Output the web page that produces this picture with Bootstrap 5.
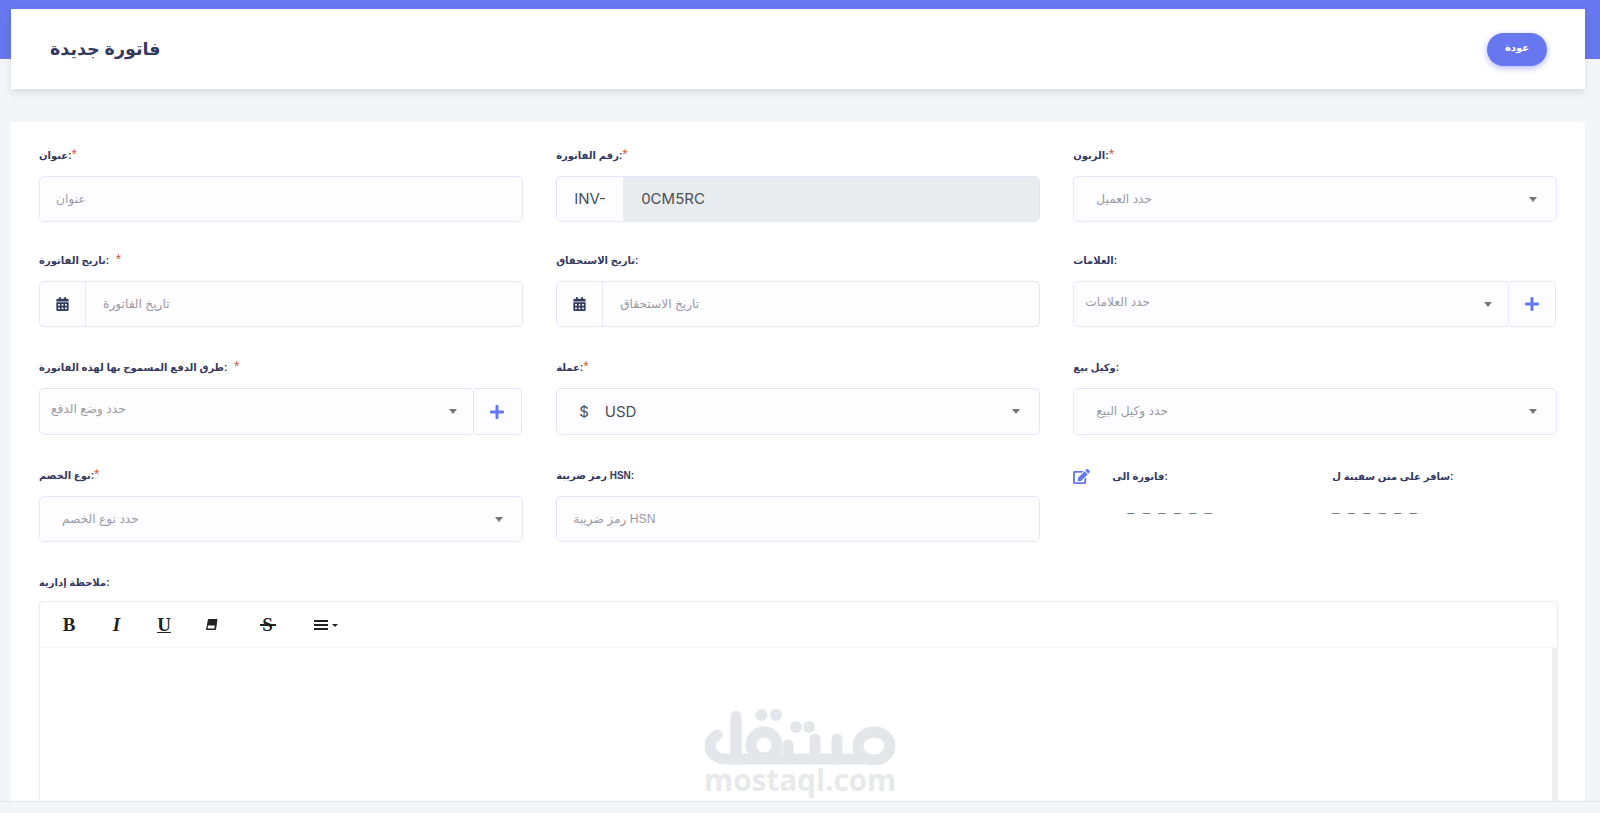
<!DOCTYPE html>
<html lang="ar">

<head>
  <meta charset="UTF-8">
  <title>فاتورة جديدة</title>
  <meta name="viewport" content="width=device-width, initial-scale=1">
  <link href="https://cdn.jsdelivr.net/npm/bootstrap@5.3.0/dist/css/bootstrap.min.css" rel="stylesheet">
  <script src="https://cdn.jsdelivr.net/npm/bootstrap@5.3.0/dist/js/bootstrap.bundle.min.js"></script>
  <style>
    html, body { height: 100%; overflow: hidden; }
    body {
      font-family: "Liberation Sans", "DejaVu Sans", sans-serif;
      font-size: 12.2px;
      color: #6c757d;
      background: linear-gradient(#6777ef 59px, #f3f5f9 59px);
    }
    .page-main { padding: 9px 15px 0 11px; min-height: 0; }
    .page-head {
      height: 80px;
      padding: 0 38px 0 39px;
      margin-bottom: 33px;
      background: #fff;
      box-shadow: 0 4px 8px rgba(0, 0, 0, .1);
    }
    .page-title { font-size: 17.5px; font-weight: 700; color: #34395e; margin: 0; }
    .back-btn {
      width: 60px;
      height: 33px;
      padding: 0 0 3px;
      border: 0;
      border-radius: 30px;
      background: #6777ef;
      color: #fff;
      font-size: 10px;
      font-weight: 700;
      box-shadow: 0 2px 6px #acb5f6;
    }
    .form-panel { background: #fff; border-radius: 3px; padding: 23px 28px 0 28px; min-height: 0; }
    .form-row { --bs-gutter-x: 33.5px; }
    .fld { margin-bottom: 28px; }
    .fld-wide { margin-bottom: 30px; }
    .fld-label { display: block; height: 20px; line-height: 22px; margin-bottom: 11px; font-size: 10px; font-weight: 700; color: #34395e; }
    .note-label { margin-bottom: 9px; }
    .req { color: #c8603c; font-weight: 400; font-size: 14px; line-height: 1; }
    .fld-box {
      height: 46px;
      background: #fdfdff;
      border: 1px solid #e4e6fc;
      border-radius: 5px;
      color: #9a9aa2;
      font-size: 12.2px;
    }
    .fld-box-tall { height: 47px; }
    input.fld-box { width: 100%; padding: 0 16px; outline: 0; }
    input.fld-box::placeholder { color: #9a9aa2; opacity: 1; }
    .box-seg { flex: 0 0 auto; height: 100%; }
    .cal-seg { width: 46px; border-right: 1px solid #e4e6fc; }
    .box-text { padding: 0 17px; }
    .inv-seg {
      width: 66px;
      padding-left: 17px;
      font-family: Inter, "Liberation Sans", sans-serif;
      font-size: 15px;
      color: #495057;
    }
    .inv-val {
      padding-left: 18px;
      background: #e9ecef;
      border-radius: 0 4px 4px 0;
      font-family: Inter, "Liberation Sans", sans-serif;
      font-size: 15px;
      color: #495057;
    }
    .pick-arrow { width: 0; height: 0; border: 4px solid transparent; border-top: 5px solid #777; border-bottom: 0; }
    .pick-wide { padding: 0 19px 0 22px; }
    .pick-tight { padding: 0 16px 4px 11px; min-width: 0; }
    .pick-tight .pick-arrow { margin-top: 4px; }
    .add-group { margin-right: 1px; }
    .add-btn {
      flex: 0 0 47px;
      border-left: 0;
      border-radius: 0 5px 5px 0;
    }
    .add-btn-wide { flex-basis: 48px; }
    .usd-sign { margin-right: 16px; }
    .usd-text { font-family: Inter, "Liberation Sans", sans-serif; font-size: 15px; color: #495057; padding-top: 1px; }
    .addr-col { flex: 0 0 259px; }
    .addr-head { height: 20px; padding-top: 2px; font-size: 10px; font-weight: 700; color: #34395e; gap: 22px; }
    .addr-dash { margin-top: 18px; font-size: 13px; color: #6c757d; letter-spacing: 2.3px; white-space: pre; font-family: "Liberation Sans", sans-serif; }
    .addr-dash-first { margin-left: 54px; }
    .note-wrap { border: 1px solid #ececee; border-radius: 4px 4px 0 0; border-bottom: 0; min-height: 0; margin-right: -1px; position: relative; }
    .note-bar { height: 46px; border-bottom: 1px solid #f5f5f5; padding-left: 22px; color: #222; }
    .tool-txt { font-family: "Liberation Serif", serif; font-size: 19px; font-weight: 700; line-height: 1; color: #222; text-align: center; width: 14px; }
    .tool-gap1 { margin-right: 33.5px; }
    .tool-gap2 { margin-right: 43px; }
    .tool-gap3 { margin-right: 39px; }
    .tool-strike { position: relative; }
    .tool-strike::after { content: ""; position: absolute; left: -1px; right: -1px; top: 9px; height: 1.5px; background: #222; }
    .note-body { background: #fff; }
    .note-track { width: 5px; margin-left: auto; background: #efefef; }
    .mark-logo { position: absolute; left: 664px; top: 107px; width: 192px; text-align: center; pointer-events: none; }
    .mark-text { font-family: "Open Sans", "Liberation Sans", sans-serif; font-weight: 700; font-size: 29.7px; line-height: 28px; margin-top: 1px; color: #e8e9eb; }
    .page-foot { flex: 0 0 12px; background: #f3f5f9; border-top: 1px solid #e3e4e8; }
  </style>
</head>

<body class="d-flex flex-column">
  <main class="page-main d-flex flex-column flex-grow-1">
    <header class="page-head d-flex justify-content-between align-items-center">
      <h1 class="page-title">فاتورة جديدة</h1>
      <button class="back-btn" type="button">عودة</button>
    </header>

    <section class="form-panel d-flex flex-column flex-grow-1">
      <div class="row form-row">
        <div class="col-4">
          <div class="fld">
            <label class="fld-label">عنوان:<span class="req">*</span></label>
            <input class="fld-box" type="text" placeholder="عنوان">
          </div>
          <div class="fld-wide">
            <label class="fld-label">تاريخ الفاتورة: <span class="req">&nbsp;*</span></label>
            <div class="fld-box d-flex align-items-center">
              <div class="box-seg cal-seg d-flex align-items-center justify-content-center">
                <svg width="13" height="14" viewBox="0 0 448 512" fill="#34395e"><path d="M0 464c0 26.500 21.500 48 48 48h352c26.500 0 48-21.500 48-48V192H0v272zm320-196c0-6.600 5.400-12 12-12h40c6.600 0 12 5.400 12 12v40c0 6.600-5.400 12-12 12h-40c-6.600 0-12-5.400-12-12v-40zm0 128c0-6.600 5.400-12 12-12h40c6.600 0 12 5.400 12 12v40c0 6.600-5.400 12-12 12h-40c-6.600 0-12-5.400-12-12v-40zM192 268c0-6.600 5.400-12 12-12h40c6.600 0 12 5.400 12 12v40c0 6.600-5.400 12-12 12h-40c-6.600 0-12-5.400-12-12v-40zm0 128c0-6.600 5.400-12 12-12h40c6.600 0 12 5.400 12 12v40c0 6.600-5.400 12-12 12h-40c-6.600 0-12-5.400-12-12v-40zM64 268c0-6.600 5.400-12 12-12h40c6.600 0 12 5.400 12 12v40c0 6.600-5.400 12-12 12H76c-6.600 0-12-5.400-12-12v-40zm0 128c0-6.600 5.400-12 12-12h40c6.600 0 12 5.400 12 12v40c0 6.600-5.400 12-12 12H76c-6.600 0-12-5.400-12-12v-40zM400 64h-48V16c0-8.800-7.200-16-16-16h-32c-8.800 0-16 7.200-16 16v48H160V16c0-8.800-7.200-16-16-16h-32c-8.800 0-16 7.200-16 16v48H48C21.500 64 0 85.500 0 112v48h448v-48c0-26.500-21.500-48-48-48z"/></svg>
              </div>
              <span class="box-text">تاريخ الفاتورة</span>
            </div>
          </div>
          <div class="fld-wide">
            <label class="fld-label">طرق الدفع المسموح بها لهذه الفاتورة: <span class="req">&nbsp;*</span></label>
            <div class="d-flex add-group">
              <div class="fld-box fld-box-tall pick-tight d-flex align-items-center justify-content-between flex-grow-1">
                <span>حدد وضع الدفع</span><span class="pick-arrow"></span>
              </div>
              <div class="fld-box fld-box-tall add-btn add-btn-wide d-flex align-items-center justify-content-center">
                <svg width="14" height="14" viewBox="0 0 14 14" fill="#6777ef"><rect x="5.500" width="3" height="14" rx="1"/><rect y="5.500" width="14" height="3" rx="1"/></svg>
              </div>
            </div>
          </div>
          <div class="fld-wide">
            <label class="fld-label">نوع الخصم:<span class="req">*</span></label>
            <div class="fld-box pick-wide d-flex align-items-center justify-content-between">
              <span>حدد نوع الخصم</span><span class="pick-arrow"></span>
            </div>
          </div>
        </div>

        <div class="col-4">
          <div class="fld">
            <label class="fld-label">رقم الفاتورة:<span class="req">*</span></label>
            <div class="fld-box d-flex align-items-center">
              <div class="box-seg inv-seg d-flex align-items-center">INV-</div>
              <div class="box-seg inv-val d-flex align-items-center flex-grow-1">0CM5RC</div>
            </div>
          </div>
          <div class="fld-wide">
            <label class="fld-label">تاريخ الاستحقاق:</label>
            <div class="fld-box d-flex align-items-center">
              <div class="box-seg cal-seg d-flex align-items-center justify-content-center">
                <svg width="13" height="14" viewBox="0 0 448 512" fill="#34395e"><path d="M0 464c0 26.500 21.500 48 48 48h352c26.500 0 48-21.500 48-48V192H0v272zm320-196c0-6.600 5.400-12 12-12h40c6.600 0 12 5.400 12 12v40c0 6.600-5.400 12-12 12h-40c-6.600 0-12-5.400-12-12v-40zm0 128c0-6.600 5.400-12 12-12h40c6.600 0 12 5.400 12 12v40c0 6.600-5.400 12-12 12h-40c-6.600 0-12-5.400-12-12v-40zM192 268c0-6.600 5.400-12 12-12h40c6.600 0 12 5.400 12 12v40c0 6.600-5.400 12-12 12h-40c-6.600 0-12-5.400-12-12v-40zm0 128c0-6.600 5.400-12 12-12h40c6.600 0 12 5.400 12 12v40c0 6.600-5.400 12-12 12h-40c-6.600 0-12-5.400-12-12v-40zM64 268c0-6.600 5.400-12 12-12h40c6.600 0 12 5.400 12 12v40c0 6.600-5.400 12-12 12H76c-6.600 0-12-5.400-12-12v-40zm0 128c0-6.600 5.400-12 12-12h40c6.600 0 12 5.400 12 12v40c0 6.600-5.400 12-12 12H76c-6.600 0-12-5.400-12-12v-40zM400 64h-48V16c0-8.800-7.200-16-16-16h-32c-8.800 0-16 7.200-16 16v48H160V16c0-8.800-7.200-16-16-16h-32c-8.800 0-16 7.200-16 16v48H48C21.500 64 0 85.500 0 112v48h448v-48c0-26.500-21.500-48-48-48z"/></svg>
              </div>
              <span class="box-text">تاريخ الاستحقاق</span>
            </div>
          </div>
          <div class="fld-wide">
            <label class="fld-label">عملة:<span class="req">*</span></label>
            <div class="fld-box fld-box-tall pick-wide d-flex align-items-center justify-content-between">
              <span class="usd-text"><span class="usd-sign">$</span>USD</span><span class="pick-arrow"></span>
            </div>
          </div>
          <div class="fld-wide">
            <label class="fld-label">رمز ضريبة HSN:</label>
            <input class="fld-box" type="text" placeholder="رمز ضريبة HSN">
          </div>
        </div>

        <div class="col-4">
          <div class="fld">
            <label class="fld-label">الزبون:<span class="req">*</span></label>
            <div class="fld-box pick-wide d-flex align-items-center justify-content-between">
              <span>حدد العميل</span><span class="pick-arrow"></span>
            </div>
          </div>
          <div class="fld-wide">
            <label class="fld-label">العلامات:</label>
            <div class="d-flex add-group">
              <div class="fld-box pick-tight d-flex align-items-center justify-content-between flex-grow-1">
                <span>حدد العلامات</span><span class="pick-arrow"></span>
              </div>
              <div class="fld-box add-btn d-flex align-items-center justify-content-center">
                <svg width="14" height="14" viewBox="0 0 14 14" fill="#6777ef"><rect x="5.500" width="3" height="14" rx="1"/><rect y="5.500" width="14" height="3" rx="1"/></svg>
              </div>
            </div>
          </div>
          <div class="fld-wide">
            <label class="fld-label">وكيل بيع:</label>
            <div class="fld-box fld-box-tall pick-wide d-flex align-items-center justify-content-between">
              <span>حدد وكيل البيع</span><span class="pick-arrow"></span>
            </div>
          </div>
          <div class="d-flex">
            <div class="addr-col">
              <div class="addr-head d-flex align-items-center">
                <svg width="17" height="15" viewBox="0 0 576 512" fill="#6777ef"><path d="M402.600 83.200l90.200 90.200c3.800 3.800 3.800 10 0 13.800L274.400 405.600l-92.800 10.300c-12.400 1.400-22.900-9.100-21.500-21.500l10.300-92.800L388.800 83.200c3.800-3.800 10-3.800 13.800 0zm162-22.900l-48.800-48.800c-15.200-15.200-39.900-15.200-55.200 0l-35.400 35.400c-3.800 3.800-3.800 10 0 13.800l90.200 90.200c3.800 3.800 10 3.800 13.800 0l35.400-35.400c15.200-15.300 15.200-40 0-55.200zM384 346.200V448H64V128h229.800c3.200 0 6.200-1.300 8.500-3.500l40-40c7.600-7.600 2.200-20.500-8.500-20.500H48C21.500 64 0 85.500 0 112v352c0 26.500 21.500 48 48 48h352c26.500 0 48-21.500 48-48V306.200c0-10.700-12.900-16-20.500-8.500l-40 40c-2.200 2.300-3.500 5.300-3.500 8.500z"/></svg>
                <span>فاتورة الى:</span>
              </div>
              <div class="addr-dash addr-dash-first">– – – – – –</div>
            </div>
            <div class="addr-col">
              <div class="addr-head d-flex align-items-center"><span>سافر على متن سفينة ل:</span></div>
              <div class="addr-dash">– – – – – –</div>
            </div>
          </div>
        </div>
      </div>

      <label class="fld-label note-label">ملاحظة إدارية:</label>
      <div class="note-wrap d-flex flex-column flex-grow-1">
        <div class="note-bar d-flex align-items-center">
          <span class="tool-txt tool-gap1">B</span>
          <span class="tool-txt tool-gap1 fst-italic">I</span>
          <span class="tool-txt tool-gap1 text-decoration-underline">U</span>
          <svg class="tool-gap2" width="13" height="13" viewBox="0 0 13 13"><path d="M3.500 1.500h8.500l-1.500 10H1.500z" fill="#222" stroke="#222" stroke-linejoin="round"/><path d="M3 7.500h6.800l-.5 3H2.600z" fill="#fff"/></svg>
          <span class="tool-txt tool-gap3 tool-strike">S</span>
          <svg width="24" height="12" viewBox="0 0 24 12" fill="#222"><rect y="1" width="14" height="2"/><rect y="5" width="14" height="2"/><rect y="9" width="14" height="2"/><path d="M18 5h6l-3 3z"/></svg>
        </div>
        <div class="note-body d-flex flex-grow-1"><div class="note-track"></div></div>
        <div class="mark-logo">
          <svg class="d-block" width="192" height="56" viewBox="0 0 192 56" fill="none" stroke="#e5e6e9" stroke-width="11" stroke-linecap="round">
            <path d="M13 26C8 29 6 33 6 37C6 45 13 50 22 50H160"/>
            <path d="M32 7V50"/>
            <circle cx="60" cy="36" r="13"/>
            <ellipse cx="170" cy="37" rx="16" ry="14"/>
            <path d="M84 36V50M111 30V50M133 30V50"/>
            <g fill="#e5e6e9" stroke="none">
              <circle cx="57.500" cy="6" r="6"/><circle cx="72" cy="6" r="6"/>
              <circle cx="92" cy="18" r="6"/><circle cx="105" cy="18" r="6"/>
            </g>
          </svg>
          <div class="mark-text">mostaql.com</div>
        </div>
      </div>
    </section>
  </main>
  <footer class="page-foot"></footer>
</body>

</html>
